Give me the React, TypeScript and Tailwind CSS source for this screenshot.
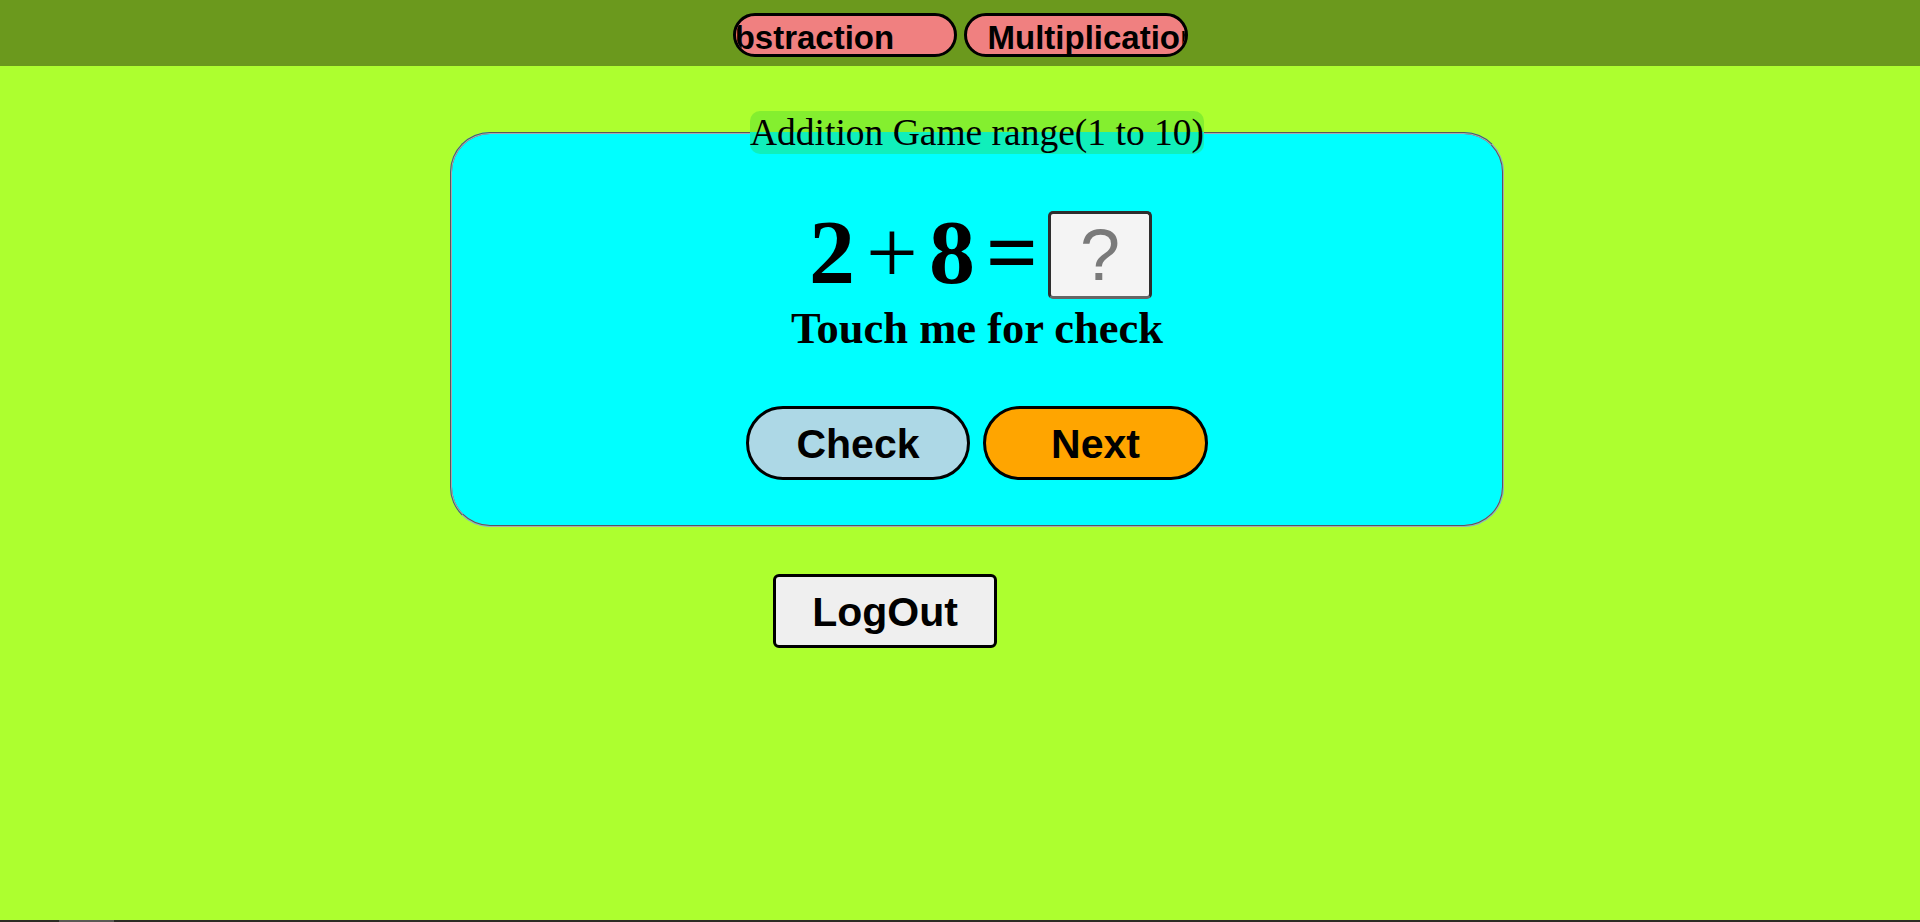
import { useState } from "react"

const serif = "[font-family:'Liberation_Serif','Times_New_Roman',serif]"

export default function App() {
  const [answer, setAnswer] = useState("")

  return (
    <div className="flex min-h-screen flex-col bg-[#adff2f] [font-family:'Liberation_Sans',Arial,sans-serif] text-black">
      <header className="flex h-[66px] items-start justify-center gap-[7px] bg-[#6b991d] pt-[13px]">
        <div className="flex h-[44px] w-[224px] items-center overflow-hidden rounded-full border-[3px] border-black bg-[#f08080] pl-[21px]">
          <span className="ml-[-64px] mt-[5px] whitespace-nowrap text-[33px] font-bold leading-[38px]">Substraction</span>
        </div>
        <div className="flex h-[44px] w-[224px] items-center overflow-hidden rounded-full border-[3px] border-black bg-[#f08080] pl-[21px]">
          <span className="mt-[5px] whitespace-nowrap text-[33px] font-bold leading-[38px]">Multiplication</span>
        </div>
      </header>

      <main className="flex-1">
        <fieldset className="ml-[450px] mt-[45px] w-[1054px] rounded-[40px] border-2 border-[#a8a8b0] [border-style:groove] bg-[#00ffff] pb-[45px]">
          <legend className={`mx-auto rounded-[10px] bg-[rgba(50,205,50,0.33)] p-0 text-[37.5px] leading-[43px] ${serif}`}>
            Addition Game range(1 to 10)
          </legend>

          <div className={`mt-[57px] flex h-[88px] items-center justify-center ${serif}`}>
            <span className="mb-[7px] w-[60px] text-center text-[92px] font-bold leading-[90px]">2</span>
            <span className="mb-[7px] w-[60px] text-center text-[92px] leading-[90px]">+</span>
            <span className="mb-[7px] w-[60px] text-center text-[92px] font-bold leading-[90px]">8</span>
            <span className="mb-[7px] w-[60px] text-center text-[92px] font-bold leading-[90px]">=</span>
            <input
              value={answer}
              onChange={e => setAnswer(e.target.value)}
              placeholder="?"
              className="ml-[6px] h-[88px] w-[104px] rounded-[5px] border-[3px] border-[#2e2e2e] border-b-[#666] bg-[#f4f4f4] text-center text-[72px] [font-family:'Liberation_Sans',Arial,sans-serif] outline-none placeholder:text-[#7a7a7a]"
            />
          </div>

          <p className={`mt-[4px] text-center text-[44.5px] font-bold leading-[50px] ${serif}`}>Touch me for check</p>

          <div className="mt-[53px] flex justify-center gap-[13px]">
            <button className="h-[74px] w-[224px] rounded-full border-[3px] border-black bg-[#add8e6] pt-[3px] text-[41px] font-bold">Check</button>
            <button className="h-[74px] w-[225px] rounded-full border-[3px] border-black bg-[#ffa500] pt-[3px] text-[41px] font-bold">Next</button>
          </div>
        </fieldset>

        <button className="ml-[773px] mt-[47px] h-[74px] w-[224px] rounded-[6px] border-[3px] border-black bg-[#efefef] pt-[3px] text-[41px] font-bold">LogOut</button>
      </main>

      <div className="flex h-[2px] bg-[#2c2c24]">
        <div className="ml-[59px] w-[55px] bg-[#5a5a55]" />
      </div>
    </div>
  )
}
